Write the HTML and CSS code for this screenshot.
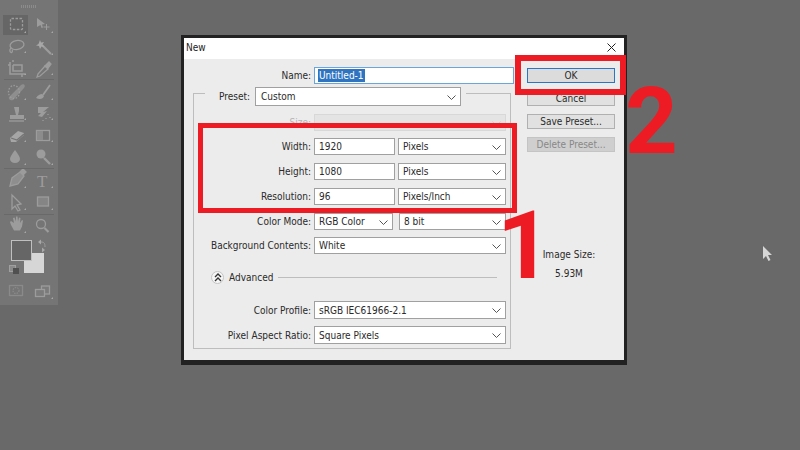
FILE: index.html
```html
<!DOCTYPE html>
<html lang="en">
<head>
<meta charset="utf-8">
<title>New</title>
<link rel="stylesheet" href="styles.css">
</head>
<body>
<main class="desktop">
  <aside class="toolbar">
    <svg class="tools" width="58" height="305" viewBox="0 0 58 305" fill="none" stroke="#9c9c9c" stroke-width="1.3">
      <rect x="3" y="15" width="25" height="20" fill="#666" stroke="none"/>
      <path d="M21 6.500H37" stroke="#8c8c8c" stroke-width="3" stroke-dasharray="1 1"/>
      <rect x="10.500" y="18.500" width="12" height="11" rx="1" stroke-dasharray="2.500 1.500"/>
      <path d="M37 18l8 6-3 .5 1 3-1.500 .5-1-3-3.500 2z" fill="#9c9c9c" stroke="none"/>
      <path d="M46.500 24v6M43.500 27h6" stroke-width="1"/>
      <ellipse cx="17" cy="45" rx="7" ry="4.500" transform="rotate(-10 17 45)"/>
      <path d="M11 48c-2 2-1 4 0 4.500s2-1.500 1-3"/>
      <path d="M42 45l9 9" stroke-width="2.200"/>
      <path d="M40 40l1 2.500 3-.5-1.500 2.500 2 2.500-3-.5-1.500 2.500-1-3-3-.5 2.500-1.500z" fill="#a8a8a8" stroke="none"/>
      <path d="M10 62v12h12M13 62v-2M13 65v6h9v-6h-9M22 74v3M10 65h-2M22 74h3" stroke-width="1.500"/>
      <path d="M38 74l7-8 3 3-8 7-3 1z"/>
      <path d="M45 66l4-4 2 2-3 4z" fill="#9c9c9c"/>
      <path d="M9 97l12-12c3-2 5 1 3 3l-11 12c-2 1-5-1-4-3z" fill="#8e8e8e" stroke="none"/>
      <ellipse cx="14" cy="92" rx="5.500" ry="6.500" stroke-dasharray="1.500 1.500"/>
      <path d="M50 85c-2 3-5 7-7 10" stroke-width="1.800"/>
      <path d="M36 98c2-3 4-4 6-4l2 2c-1 3-4 4-8 2z" fill="#9c9c9c" stroke="none"/>
      <path d="M14 107h5v4l-1 4h6v4H10v-4h6l-1-4z" fill="#9c9c9c" stroke="none"/>
      <path d="M9 121h15"/>
      <path d="M38 107h11l-6 5 4-1-5 6-4-1 3-3h-3z" fill="#9c9c9c" stroke="none"/>
      <path d="M48 114v1M50 117v1M46 118v1M43 120v1" stroke-dasharray="1 1"/>
      <path d="M10 138l8-7 6 2v2l-8 7h-5z" fill="#a6a6a6" stroke="none"/>
      <path d="M11 138l6 2 7-6" stroke="#757575"/>
      <rect x="36.500" y="130.500" width="13" height="10"/>
      <rect x="37" y="131" width="6" height="9" fill="#8c8c8c" stroke="none"/>
      <path d="M15 150c-3 4-5 7-5 9s2 4 5 4 5-2 5-4-2-5-5-9z" fill="#9c9c9c" stroke="none"/>
      <circle cx="41" cy="154" r="4.500" fill="#9c9c9c" stroke="none"/>
      <path d="M44 158l6 6" stroke-width="2.400"/>
      <path d="M10 186l2-8 8-6 4 4-6 8z" fill="#8e8e8e"/>
      <path d="M20 172l3-3 3 3-3 3" fill="#9c9c9c"/>
      <text x="37" y="187" font-family="Liberation Serif, serif" font-size="17" fill="#9c9c9c" stroke="none">T</text>
      <path d="M12 195v14l3-3 3 5 2-1-3-5 4-1z"/>
      <rect x="37.500" y="197" width="11" height="9" fill="#858585"/>
      <path d="M11 225l-1-3 1-1 3 2-1-5 1.500-.5 1.500 4v-5h1.500l.5 5 1-4 1.500.5-.5 5 2-3 1 .5-1 6-2 4h-6z" fill="#9c9c9c" stroke="none"/>
      <circle cx="41" cy="224" r="4.500"/>
      <path d="M44.500 228l4 4" stroke-width="2.200"/>
      <path d="M38 242l3-2.500v5zM45 250l-3 2.500v-5z" fill="#a8a8a8" stroke="none"/>
      <path d="M41 242c3 0 4 1 4 5" stroke-width="1"/>
      <rect x="9.500" y="265.500" width="6" height="6" fill="#8a8a8a" stroke="#a0a0a0" stroke-width="1"/>
      <rect x="13" y="268" width="6" height="6" fill="#505050" stroke="none"/>
      <rect x="9.500" y="285.500" width="13" height="10" stroke="#8a8a8a"/>
      <circle cx="16" cy="290.500" r="3" stroke="#8a8a8a" stroke-dasharray="1.500 1"/>
      <rect x="41.500" y="286" width="8" height="8" fill="#7b7b7b"/>
      <rect x="35.500" y="289.500" width="9" height="7" fill="#7b7b7b"/>
      <path fill="#a8a8a8" stroke="none" d="M26 33v-2l-2 2zM53 33v-2l-2 2zM26 53v-2l-2 2zM53 55v-2l-2 2zM26 75v-2l-2 2zM53 75v-2l-2 2zM26 100v-2l-2 2zM53 100v-2l-2 2zM26 120v-2l-2 2zM53 120v-2l-2 2zM26 142v-2l-2 2zM53 142v-2l-2 2zM26 165v-2l-2 2zM53 165v-2l-2 2zM26 188v-2l-2 2zM53 188v-2l-2 2zM26 210v-2l-2 2zM53 210v-2l-2 2zM26 233v-2l-2 2zM53 299v-2l-2 2z"/>
      <path d="M4 79.500H54M4 168.500H54M4 214.500H54" stroke="#696969" stroke-width="1"/>
    </svg>
    <span class="swatch swatch-bg"></span>
    <span class="swatch swatch-fg"></span>
  </aside>

  <section class="dialog">
    <header class="titlebar">
      <span>New</span>
      <svg class="close" width="9" height="9" viewBox="0 0 9 9" stroke="#222" fill="none"><path d="M.5.500l8 8M8.500.500l-8 8"/></svg>
    </header>
    <div class="body">
      <div class="form">
        <div class="row row-name">
          <label class="label">Name:</label>
          <div class="field field-name"><span class="sel">Untitled-1</span></div>
        </div>
        <fieldset class="group">
          <legend class="legend">
            <label class="label">Preset:</label>
            <div class="field field-preset">Custom<svg class="chev" width="9" height="5" viewBox="0 0 9 5"><path d="M.5.500l4 4 4-4"/></svg></div>
          </legend>
          <div class="row row-size">
            <label class="label label-off">Size:</label>
            <div class="field field-off"><svg class="chev chev-off" width="9" height="5" viewBox="0 0 9 5"><path d="M.5.500l4 4 4-4"/></svg></div>
          </div>
          <div class="row row-dim">
            <label class="label">Width:</label>
            <div class="field field-num">1920</div>
            <div class="field field-unit">Pixels<svg class="chev" width="9" height="5" viewBox="0 0 9 5"><path d="M.5.500l4 4 4-4"/></svg></div>
          </div>
          <div class="row row-dim">
            <label class="label">Height:</label>
            <div class="field field-num">1080</div>
            <div class="field field-unit">Pixels<svg class="chev" width="9" height="5" viewBox="0 0 9 5"><path d="M.5.500l4 4 4-4"/></svg></div>
          </div>
          <div class="row row-dim">
            <label class="label">Resolution:</label>
            <div class="field field-num">96</div>
            <div class="field field-unit">Pixels/Inch<svg class="chev" width="9" height="5" viewBox="0 0 9 5"><path d="M.5.500l4 4 4-4"/></svg></div>
          </div>
          <div class="row row-dim">
            <label class="label">Color Mode:</label>
            <div class="field field-mode">RGB Color<svg class="chev" width="9" height="5" viewBox="0 0 9 5"><path d="M.5.500l4 4 4-4"/></svg></div>
            <div class="field field-depth">8 bit<svg class="chev" width="9" height="5" viewBox="0 0 9 5"><path d="M.5.500l4 4 4-4"/></svg></div>
          </div>
          <div class="row row-dim row-bg">
            <label class="label">Background Contents:</label>
            <div class="field field-wide">White<svg class="chev" width="9" height="5" viewBox="0 0 9 5"><path d="M.5.500l4 4 4-4"/></svg></div>
          </div>
          <div class="advanced">
            <span class="adv-btn"><svg width="8" height="9" viewBox="0 0 8 9" fill="none" stroke="#333" stroke-width="1.400"><path d="M1 4l3-3 3 3M1 8l3-3 3 3"/></svg></span>
            <span class="adv-text">Advanced</span>
            <span class="adv-line"></span>
          </div>
          <div class="row row-dim">
            <label class="label">Color Profile:</label>
            <div class="field field-wide">sRGB IEC61966-2.1<svg class="chev" width="9" height="5" viewBox="0 0 9 5"><path d="M.5.500l4 4 4-4"/></svg></div>
          </div>
          <div class="row row-dim row-last">
            <label class="label">Pixel Aspect Ratio:</label>
            <div class="field field-wide">Square Pixels<svg class="chev" width="9" height="5" viewBox="0 0 9 5"><path d="M.5.500l4 4 4-4"/></svg></div>
          </div>
        </fieldset>
      </div>
      <div class="side">
        <div class="btn btn-ok">OK</div>
        <div class="btn">Cancel</div>
        <div class="btn">Save Preset...</div>
        <div class="btn btn-off">Delete Preset...</div>
        <div class="size-info">
          <div>Image Size:</div>
          <div>5.93M</div>
        </div>
      </div>
    </div>
  </section>

  <div class="mark mark-1"></div>
  <div class="mark mark-2"></div>
  <span class="num num-1">1</span>
  <span class="num num-2">2</span>
  <svg class="cursor" width="11" height="16" viewBox="0 0 11 16"><path d="M1 0v13l3-3 2.500 5 2-1-2.500-5h4z" fill="#d6d6d6"/></svg>
</main>
</body>
</html>
```
FILE: styles.css
```css
* { box-sizing: border-box; }
html, body { margin: 0; padding: 0; }
body { width: 800px; height: 450px; overflow: hidden; font-family: "DejaVu Sans", "Open Sans", sans-serif; font-stretch: condensed; }
.desktop { position: relative; width: 800px; height: 450px; background: #696969; overflow: hidden; }

.toolbar { position: absolute; left: 0; top: 0; width: 58px; height: 305px; background: #757575; }
.tools { display: block; }
.swatch { position: absolute; display: block; }
.swatch-fg { left: 11px; top: 240px; width: 21px; height: 21px; background: #666; border: 1px solid #c0c0c0; }
.swatch-bg { left: 24px; top: 253px; width: 20px; height: 20px; background: #d6d6d6; }

.dialog { position: absolute; left: 181px; top: 35px; width: 446px; height: 330px; border: solid #222; border-width: 3px 3px 5px 3px; background: #ececec; display: flex; flex-direction: column; font-size: 10px; color: #2a2a2a; }
.titlebar { height: 21px; flex: none; background: #fff; display: flex; align-items: center; justify-content: space-between; padding: 0 8px 2px 2px; color: #222; }
.body { display: flex; flex: 1; padding: 8px 0 0 9px; }
.form { width: 322px; flex: none; }

.row { display: flex; align-items: center; }
.label { display: block; text-align: right; white-space: nowrap; }
.row-name .label { width: 121px; padding-right: 3px; flex: none; }
.row-dim .label, .row-size .label { width: 120px; padding-right: 3px; flex: none; }
.row-name { height: 16px; }

.field { position: relative; display: flex; align-items: center; height: 17px; padding-left: 4px; background: #fff; border: 1px solid #a0a0a0; white-space: nowrap; color: #2a2a2a; }
.field-name { width: 200px; height: 17px; border-color: #6aa6d8; padding-left: 3px; }
.sel { background: #2f74c0; color: #fff; padding: 0 1px; line-height: 13px; }
.chev { position: absolute; right: 4px; top: 50%; margin-top: -2px; fill: none; stroke: #555; stroke-width: 1; }
.chev-off { stroke: #ccc; }

.group { position: relative; margin: 10px 0 0 0; padding: 0 0 5px 4px; width: 318px; height: 256px; border: 1px solid #bdbdbd; border-top: none; }
.group::before { content: ""; position: absolute; left: -1px; top: 0; width: 12px; height: 1px; background: #bdbdbd; }
.group::after { content: ""; position: absolute; left: 272px; right: -1px; top: 0; height: 1px; background: #bdbdbd; }
.legend { display: contents; }
.legend .label { position: absolute; left: 25px; top: -3px; line-height: 14px; }
.field-preset { position: absolute; left: 61px; top: -6px; width: 206px; height: 19px; padding-left: 5px; }
.row-size { margin-top: 21px; margin-left: -4px; height: 17px; }
.row-dim { margin-left: -4px; height: 17px; margin-top: 8px; }
.row-size + .row-dim { margin-top: 7px; }
.row-dim.row-bg { margin-top: 7px; }
.label-off { color: #b5b5b5; }
.field-off { width: 192px; background: #e4e4e4; border-color: #d8d8d8; }
.field-num { width: 81px; }
.field-unit { width: 108px; margin-left: 3px; }
.field-mode { width: 79px; }
.field-depth { width: 107px; margin-left: 6px; }
.field-wide { width: 192px; }
.advanced { display: flex; align-items: center; height: 16px; margin: 15px 13px 0 13px; }
.adv-btn { flex: none; width: 13px; height: 13px; border-radius: 50%; background: #f6f6f6; border: 1px solid #c4c4c4; display: flex; align-items: center; justify-content: center; }
.adv-text { margin-left: 5px; }
.adv-line { flex: 1; height: 1px; margin-left: 5px; background: #bdbdbd; }
.advanced + .row-dim { margin-top: 16px; height: 18px; }
.advanced + .row-dim .field { height: 18px; }
.row-last { height: 18px; margin-top: 7px; }
.row-last .field { height: 18px; }

.side { flex: 1; display: flex; flex-direction: column; padding-left: 12px; }
.btn { width: 88px; height: 15px; margin-bottom: 8px; background: #e1e1e1; border: 1px solid #b0b0b0; display: flex; align-items: center; justify-content: center; line-height: 1; }
.btn-ok { border: 1px solid #2a76c4; background: #dcdcdc; margin-top: 1px; }
.btn-off { background: #cfcfcf; border-color: #c4c4c4; color: #888; }
.size-info { width: 84px; margin-top: 88px; text-align: center; display: flex; flex-direction: column; gap: 5px; line-height: 14px; }

.mark { position: absolute; border: 5px solid #ed1c24; }
.mark-1 { left: 198px; top: 123px; width: 319px; height: 90px; }
.mark-2 { left: 515px; top: 55px; width: 111px; height: 40px; border-width: 6px; }
.num { position: absolute; font-family: Roboto, sans-serif; font-stretch: normal; font-weight: 700; color: #ed1c24; line-height: 1; }
.num-1 { left: 497px; top: 198px; width: 42px; font-size: 95px; }
.num-2 { left: 625px; top: 76px; font-size: 92px; }
.cursor { position: absolute; left: 762px; top: 246px; }
```
